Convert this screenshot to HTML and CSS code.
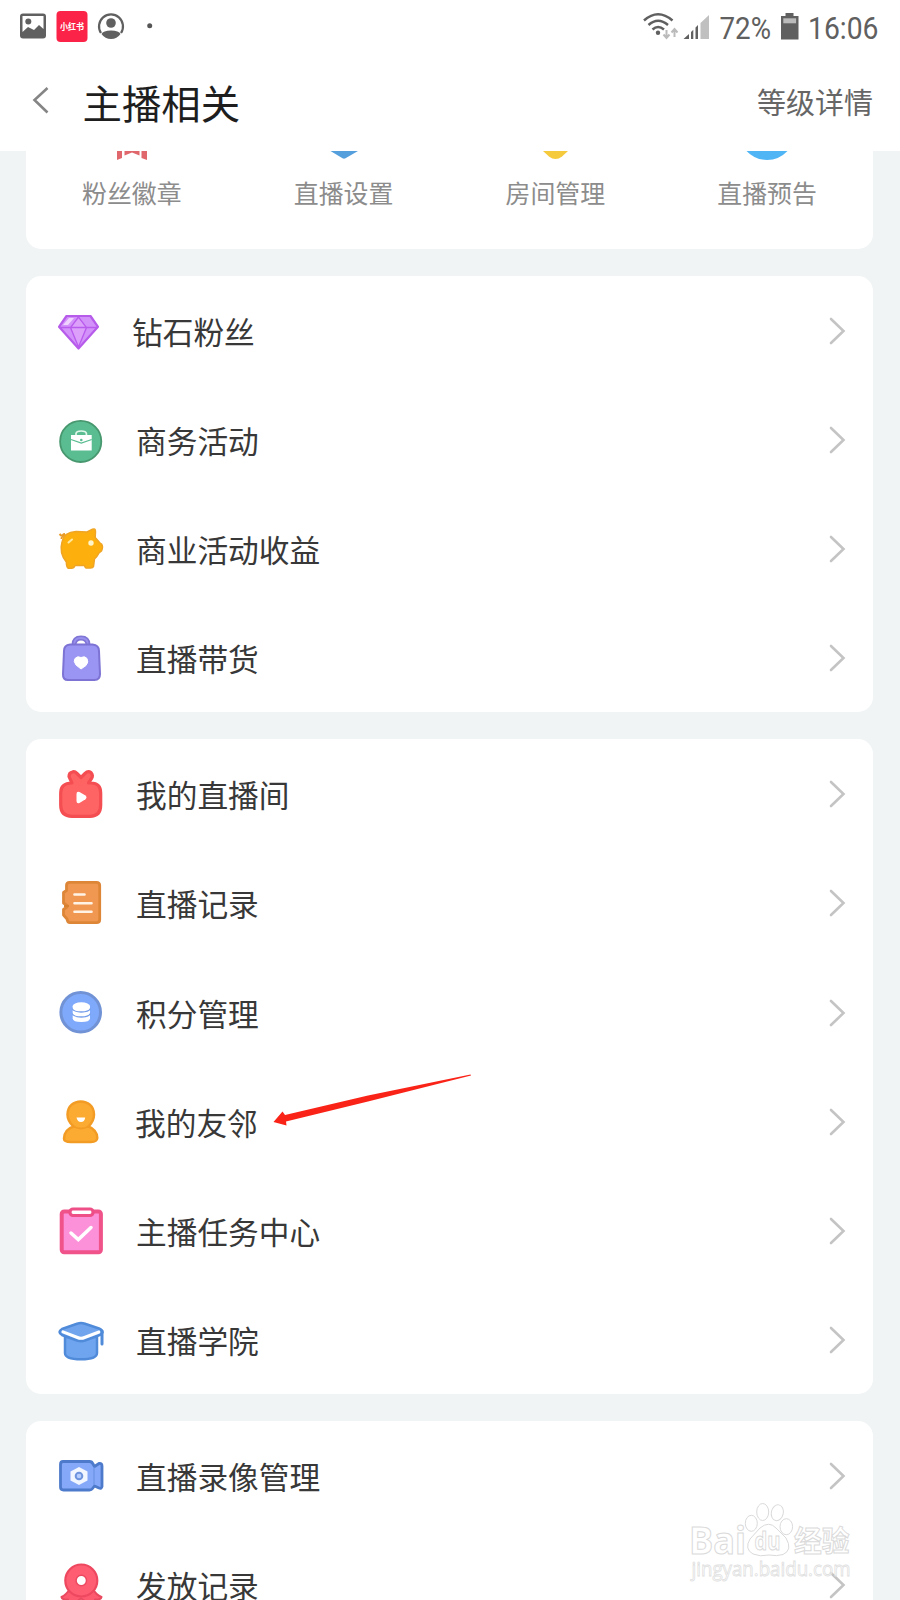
FILE: index.html
```html
<!DOCTYPE html>
<html lang="zh-CN">
<head>
<meta charset="utf-8">
<title>主播相关</title>
<link rel="stylesheet" href="styles.css">
</head>
<body>
<header class="header">
  <div class="status">
    <svg class="status-left" width="160" height="50" viewBox="0 0 160 50">
      <rect x="20" y="13.500" width="26" height="25" rx="3" fill="#606060"/>
      <path d="M22.500 16H43.500V29L39 25 34 30 28 27 22.500 32Z" fill="#fff"/>
      <circle cx="28.300" cy="21.500" r="3" fill="#606060"/>
      <rect x="56.500" y="11" width="31" height="31" rx="4" fill="#fb2448"/>
      <text class="app-mark" x="72" y="29.500" text-anchor="middle" textLength="24" lengthAdjust="spacingAndGlyphs">小红书</text>
      <path d="M101 33A12 12 0 1 1 121 33" fill="none" stroke="#606060" stroke-width="2.200"/>
      <circle cx="111" cy="23" r="4.800" fill="#606060"/>
      <path d="M101.500 34Q103 30.500 111 30.500T120.500 34Q117 39 111 39T101.500 34Z" fill="#606060"/>
      <circle cx="149.700" cy="25.700" r="2.500" fill="#555"/>
    </svg>
    <svg class="status-right" width="260" height="50" viewBox="640 0 260 50">
      <g fill="none" stroke="#606060" stroke-width="2.500">
        <path d="M644 20.500Q658 8 672.500 20.500"/>
        <path d="M648.500 25Q658 16.500 668 25"/>
        <path d="M652.500 29.500Q658 24.500 664 29.500"/>
      </g>
      <circle cx="658" cy="32.700" r="2.200" fill="#606060"/>
      <g fill="none" stroke="#bbb" stroke-width="2"><path d="M666.500 30V38M663.500 34.500 666.500 38 669.500 34.500"/><path d="M674.500 37V29M671.500 32.500 674.500 29 677.500 32.500"/></g>
      <path d="M683.500 39 689 34V39ZM691 32 693.300 29.800V39H691ZM695.500 27.500 698 25V39H695.500Z" fill="#606060"/>
      <path d="M700.500 23 709 15V39H700.500Z" fill="#c0c0c0"/>
      <text class="status-text" x="719.500" y="39" textLength="51.500" lengthAdjust="spacingAndGlyphs">72%</text>
      <path d="M781 16H785.500V13H793.500V16H798.500V39.500H781Z" fill="#606060"/>
      <rect x="783.300" y="18.300" width="12.800" height="5" fill="#bbb"/>
      <text class="status-text" x="808" y="39" textLength="70.500" lengthAdjust="spacingAndGlyphs">16:06</text>
    </svg>
  </div>
  <div class="titlebar">
    <svg class="back" width="18" height="28" viewBox="0 0 18 28"><path d="M15.500 2 2.500 14 15.500 26.500" fill="none" stroke="#858585" stroke-width="2.600"/></svg>
    <h1 class="title">主播相关</h1>
    <a class="detail">等级详情</a>
  </div>
</header>
<main class="content">
  <section class="card shortcuts">
    <div class="shortcut"><svg width="44" height="11" viewBox="0 0 44 11"><path d="M7 0H12V7L7 9ZM14.500 0H29.500V4.500L22 1.500 14.500 4.500ZM31.500 0H37V9L31.500 7Z" fill="#e0686c"/></svg><span>粉丝徽章</span></div>
    <div class="shortcut"><svg width="44" height="11" viewBox="0 0 44 11"><path d="M8.500 0H36L23.500 7.300Q22 8.200 20.500 7.300Z" fill="#559fdd"/></svg><span>直播设置</span></div>
    <div class="shortcut"><svg width="44" height="11" viewBox="0 0 44 11"><path d="M10 0H35L29 5.500Q22.500 10.500 16 5.500Z" fill="#f6ca3d"/></svg><span>房间管理</span></div>
    <div class="shortcut"><svg width="44" height="11" viewBox="0 0 44 11"><path d="M1.500 0H42.500Q34 9 22 9T1.500 0Z" fill="#4fb5f5"/></svg><span>直播预告</span></div>
  </section>

  <section class="card">
    <div class="row first"><svg class="icon" viewBox="0 0 54 54"><path d="M12.500 12H36.500L44 22.800 24.500 44.500 5 22.800Z" fill="#d391fa" stroke="#b65bea" stroke-width="2.200" stroke-linejoin="round"/><path d="M24.500 13 16.500 23.500 24.500 43 32.500 23.500ZM6 23.500H44" fill="#dca0fb" stroke="#b95bed" stroke-width="1.300"/><path d="M15 14 20 14 14 21 9 21Z" fill="#f0d2ff"/></svg><span class="label">钻石粉丝</span><svg class="chevron" viewBox="0 0 18 28"><path d="M2 2 14.500 14 2 26"/></svg></div>
    <div class="row"><svg class="icon" viewBox="0 0 54 54"><circle cx="26.700" cy="28.400" r="20.600" fill="#5abc91" stroke="#48986f" stroke-width="1.800"/><path d="M22 22V20.500Q22.500 18 27.200 18T32.400 20.500V22" fill="none" stroke="#e1f7eb" stroke-width="1.700"/><path d="M17 22H37.700V37.500H17Z" fill="#fff"/><path d="M17 26.500 27.300 30 37.700 26.500" fill="none" stroke="#5abc91" stroke-width="1.300"/><circle cx="27.300" cy="27" r="1.300" fill="#5abc91"/></svg><span class="label">商务活动</span><svg class="chevron" viewBox="0 0 18 28"><path d="M2 2 14.500 14 2 26"/></svg></div>
    <div class="row"><svg class="icon" viewBox="0 0 54 54"><path d="M5.500 12Q9 16 11 12.500M7.500 17Q8 12 11 12" fill="none" stroke="#e99b28" stroke-width="2"/><path d="M8 20Q10 10 22 9.500L33 10 38.500 7.200Q41.500 6 41.500 9.500L41.200 15.500Q43.500 18 45.500 20.500L47.500 22Q49.500 25 47.500 29L45 31Q43 35 40.500 37L39.500 44.500Q39 46 36.500 46H33Q31 46 30.500 43.500H21Q20 46.300 17.500 46.300H14.500Q12.500 46 12.300 40Q5 31 8 20Z" fill="#fdb00d" stroke="#f0a424" stroke-width="1.500" stroke-linejoin="round"/><circle cx="37" cy="21" r="2.700" fill="#fff5cc"/><path d="M14.500 20.500 18 17.500" stroke="#ffe9a0" stroke-width="2" stroke-linecap="round"/></svg><span class="label">商业活动收益</span><svg class="chevron" viewBox="0 0 18 28"><path d="M2 2 14.500 14 2 26"/></svg></div>
    <div class="row"><svg class="icon" viewBox="0 0 54 54"><path d="M20 14Q20 7 27 7T34 14" fill="none" stroke="#7e75d4" stroke-width="5"/><path d="M20 14Q20 7 27 7T34 14" fill="none" stroke="#988fed" stroke-width="1.800"/><path d="M16 13.500H38.500Q45 14 45 20L46 43Q46 49 40.500 49H14Q8.700 49 9 43L10 20Q10 14 16 13.500Z" fill="#9a94f2" stroke="#7c73d4" stroke-width="2"/><path d="M27 38 22 34Q19 30 21 27.500Q23.500 24.500 27 26.500Q31 24.500 33 27.500Q35 31 32 34.500Z" fill="#fff" stroke="#fff" stroke-width="1" stroke-linejoin="round"/></svg><span class="label">直播带货</span><svg class="chevron" viewBox="0 0 18 28"><path d="M2 2 14.500 14 2 26"/></svg></div>
  </section>

  <section class="card">
    <div class="row"><svg class="icon" viewBox="0 0 54 54"><path d="M18 16 15 9.500Q15 5.500 18.500 5 20.500 4 23 6.500L27 10.500 31 6.500Q34 3.500 37 5.500 39.500 8.500 37.500 11.500L34.500 16H37Q46.700 16 46.700 26V38Q46.700 49.300 36 49.300H18Q6.700 49.300 6.700 38V26Q6.700 16 18 16Z" fill="#fe6463" stroke="#f44e52" stroke-width="3.200" stroke-linejoin="round"/><path d="M20.500 11 27 17.500 33.500 11" fill="none" stroke="#fe6463" stroke-width="3"/><path d="M22.500 27Q22.500 24 25.500 25L31.500 28.500Q33.500 30.500 31.500 32.200L25.500 36Q22.500 37 22.500 34Z" fill="#fff"/></svg><span class="label">我的直播间</span><svg class="chevron" viewBox="0 0 18 28"><path d="M2 2 14.500 14 2 26"/></svg></div>
    <div class="row"><svg class="icon" viewBox="0 0 54 54"><path d="M15.500 6.300H42.500Q45.700 6.300 45.700 9.500V43.500Q45.700 46.700 42.500 46.700H16Q13.500 46.700 13 43L9.500 39V33.500L13 31V29.500L9.500 27V16.500L12.500 14.500V9.500Q12.500 6.300 15.500 6.300Z" fill="#f09852" stroke="#dd8638" stroke-width="2.800" stroke-linejoin="round"/><path d="M20.500 18.500H30.500M20.500 27.200H37.500M20.500 35.800H37.500" stroke="#fff3e6" stroke-width="2.600" stroke-linecap="round"/><path d="M10 30H15" stroke="#d97f30" stroke-width="2"/></svg><span class="label">直播记录</span><svg class="chevron" viewBox="0 0 18 28"><path d="M2 2 14.500 14 2 26"/></svg></div>
    <div class="row"><svg class="icon" viewBox="0 0 54 54"><circle cx="26.700" cy="26.300" r="19.800" fill="#7fa9fb" stroke="#7193d6" stroke-width="3"/><path d="M18.700 20V32.500Q19 36 27.300 36T36 32.500V20Z" fill="#fff"/><ellipse cx="27.300" cy="20" rx="8.700" ry="3.700" fill="#fff"/><path d="M18 22.500Q20 26 27.300 26T36.500 22.500M18 27.500Q20 31 27.300 31T36.500 27.500" fill="none" stroke="#759eea" stroke-width="1.300"/></svg><span class="label">积分管理</span><svg class="chevron" viewBox="0 0 18 28"><path d="M2 2 14.500 14 2 26"/></svg></div>
    <div class="row neighbour"><svg class="icon" viewBox="0 0 54 54"><path d="M19.500 31.500Q13.500 26 13.500 19.500C13.500 2 40 2 40 19.500Q40 26 34.500 31.500Q43 35 43.300 43Q43 47 37 47H17Q10 47 10 43.500Q10.500 34.500 19.500 31.500Z" fill="#fcab32" stroke="#f39c25" stroke-width="2.500"/><path d="M19.500 31.500Q27 35.500 34.500 31.500" fill="none" stroke="#f39c25" stroke-width="1.800"/><path d="M22.500 22.500H31.200Q30.500 27 27 27T22.500 22.500Z" fill="#fff"/></svg><span class="label">我的友邻</span><svg class="chevron" viewBox="0 0 18 28"><path d="M2 2 14.500 14 2 26"/></svg>
      <svg class="pointer" width="202" height="56" viewBox="0 0 202 56"><path d="M1.500 49 10.500 38.500 13 42 96 22.500 198.500 1.500 199 2.500 96 28.500 14 48.500 14.500 52.500Z" fill="#fa2318"/></svg></div>
    <div class="row"><svg class="icon" viewBox="0 0 54 54"><rect x="7.700" y="7.500" width="39.200" height="40.800" rx="2.500" fill="#fd91d9" stroke="#f0528a" stroke-width="4"/><rect x="16" y="5" width="23" height="6.500" rx="3" fill="#fff" stroke="#ed4f86" stroke-width="3.200"/><path d="M17 29 24.300 35.600 37 23.500" fill="none" stroke="#fff" stroke-width="3.500" stroke-linecap="round"/></svg><span class="label">主播任务中心</span><svg class="chevron" viewBox="0 0 18 28"><path d="M2 2 14.500 14 2 26"/></svg></div>
    <div class="row"><svg class="icon" viewBox="0 0 54 54"><path d="M11 24V40Q11 46.300 27 46.300T43 40V24Z" fill="#6fa5ef" stroke="#508bda" stroke-width="2.500"/><path d="M8 16 23 10.700Q27 9.500 31 10.700L45 15.500Q48.500 17 48.500 19.500L46 22 31 27.500Q27 29 23 27.500L8 22Q3 19 8 16Z" fill="#70a5ee" stroke="#508bda" stroke-width="2.500"/><path d="M9 18.800 23.500 24.500Q27 26 30.500 24.500L45 19" fill="none" stroke="#fff" stroke-width="3" stroke-linecap="round"/><path d="M48 18V31" stroke="#508bda" stroke-width="3" stroke-linecap="round"/></svg><span class="label">直播学院</span><svg class="chevron" viewBox="0 0 18 28"><path d="M2 2 14.500 14 2 26"/></svg></div>
  </section>

  <section class="card">
    <div class="row"><svg class="icon" viewBox="0 0 54 54"><path d="M9 12.500H35.500Q38 12.500 39 15L40.500 17.500 45 14.500Q48 14 48 17V37.500Q47.500 40 45 39L40.500 37 38.500 39.500Q37.500 41 35.500 41H9.500Q6.500 41 6.500 38V15.500Q6.500 12.500 9 12.500Z" fill="#86a8f8" stroke="#4d7acb" stroke-width="2.800" stroke-linejoin="round"/><path d="M25 18 33.500 22.500V31.500L25 36 16.500 31.500V22.500Z" fill="#f1f6ff"/><circle cx="25" cy="27" r="3.300" fill="#b7cdfd" stroke="#6e94de" stroke-width="2"/><path d="M40 18.500V36" stroke="#6f97e9" stroke-width="1.500"/></svg><span class="label">直播录像管理</span><svg class="chevron" viewBox="0 0 18 28"><path d="M2 2 14.500 14 2 26"/></svg></div>
    <div class="row"><svg class="icon" viewBox="0 0 54 54"><path d="M16 31Q12 37 7.500 39 8 42 14 41.500 15 47.500 18 47L27 40.500 37 47Q40 47.500 41 41.500 47 42 47.500 39 42 37 39 31Z" fill="#fd5a70" stroke="#ea4a60" stroke-width="2" stroke-linejoin="round"/><circle cx="27.300" cy="22.500" r="16" fill="#fe5d72" stroke="#ed485f" stroke-width="2.200"/><circle cx="27.300" cy="22.500" r="5.200" fill="#fff" stroke="#ed4a61" stroke-width="1.500"/></svg><span class="label">发放记录</span><svg class="chevron" viewBox="0 0 18 28"><path d="M2 2 14.500 14 2 26"/></svg></div>
  </section>
</main>
<svg class="watermark" width="170" height="90" viewBox="0 0 170 90">
  <g class="wm">
    <text class="wm-latin" x="2" y="53.500" textLength="57" lengthAdjust="spacingAndGlyphs">Bai</text>
    <ellipse cx="64.300" cy="23.300" rx="6" ry="8"/>
    <ellipse cx="75.700" cy="12" rx="6" ry="8.500"/>
    <ellipse cx="90.300" cy="12.700" rx="6" ry="8" transform="rotate(12 90.300 12.700)"/>
    <ellipse cx="99.300" cy="26.700" rx="6.300" ry="8"/>
    <path d="M73 28Q82 20.500 89 28L99 38Q106 50 96 54.500Q90 56.500 82 55Q73 57 66 54Q57 49 63 39Z"/>
    <text class="wm-du" x="67.500" y="50" textLength="26" lengthAdjust="spacingAndGlyphs">du</text>
    <text class="wm-cjk" x="107" y="51.500" textLength="55.500" lengthAdjust="spacingAndGlyphs">经验</text>
    <text class="wm-url" x="4.500" y="75.500" textLength="159" lengthAdjust="spacingAndGlyphs">jingyan.baidu.com</text>
  </g>
</svg>
</body>
</html>
```
FILE: styles.css
```css
* { box-sizing: border-box; }
html { height: 1600px; overflow: hidden; }
body {
  position: relative;
  width: 900px;
  height: 1600px;
  margin: 0;
  overflow: hidden;
  background: #f0f4f5;
  font-family: "Liberation Sans", "Noto Sans CJK SC", sans-serif;
  color: #383838;
}
svg { display: block; flex: none; }
.header { height: 151px; background: #fff; }
.status { display: flex; justify-content: space-between; height: 50px; }
.app-mark { font: 700 9px "Noto Sans CJK SC", sans-serif; fill: #fff; }
.status-text { font: 32px Roboto, sans-serif; fill: #606060; }
.titlebar { display: flex; align-items: center; height: 106px; padding: 0 27px 0 31.500px; }
.back { margin-top: -6px; }
.title { margin: 3px auto 0 33px; font-size: 39.400px; font-weight: 400; line-height: 60px; color: #1e1e1e; }
.detail { padding-top: 2px; font-size: 29px; line-height: 44px; color: #666; }
.content { display: flex; flex-direction: column; gap: 26.700px; padding: 0 27px 0 26px; }
.card { flex: none; background: #fff; border-radius: 15px; }
.shortcuts { display: grid; grid-template-columns: repeat(4, 1fr); height: 98px; border-radius: 0 0 15px 15px; }
.shortcut { display: flex; flex-direction: column; align-items: center; gap: 13px; font-size: 24.900px; line-height: 38px; color: #8c8c8c; }
.row { position: relative; display: flex; align-items: center; height: 109.200px; padding: 1px 26.500px 0 28px; }
.icon { width: 54px; height: 54px; }
.label { flex: 1; margin-left: 28px; padding-top: 6px; font-size: 30.700px; line-height: 46px; }
.first .label { margin-left: 24px; }
.neighbour .label { margin-left: 27px; }
.chevron { width: 18px; height: 28px; }
.chevron path { fill: none; stroke: #c4c4c4; stroke-width: 2.600; stroke-linecap: round; }
.pointer { position: absolute; left: 245.500px; top: 6px; }
.watermark { position: absolute; left: 687px; top: 1500px; overflow: visible; }
.wm { fill: #fff; fill-opacity: .6; stroke: #dadada; stroke-width: 1; }
.wm-latin { font: 700 37px "Open Sans", sans-serif; }
.wm-du { font: 700 25px "Open Sans", sans-serif; }
.wm-cjk { font: 700 29px "Noto Sans CJK SC", sans-serif; }
.wm-url { font: 20px "Open Sans", sans-serif; stroke: #e0e0e0; stroke-width: .8; }
```
